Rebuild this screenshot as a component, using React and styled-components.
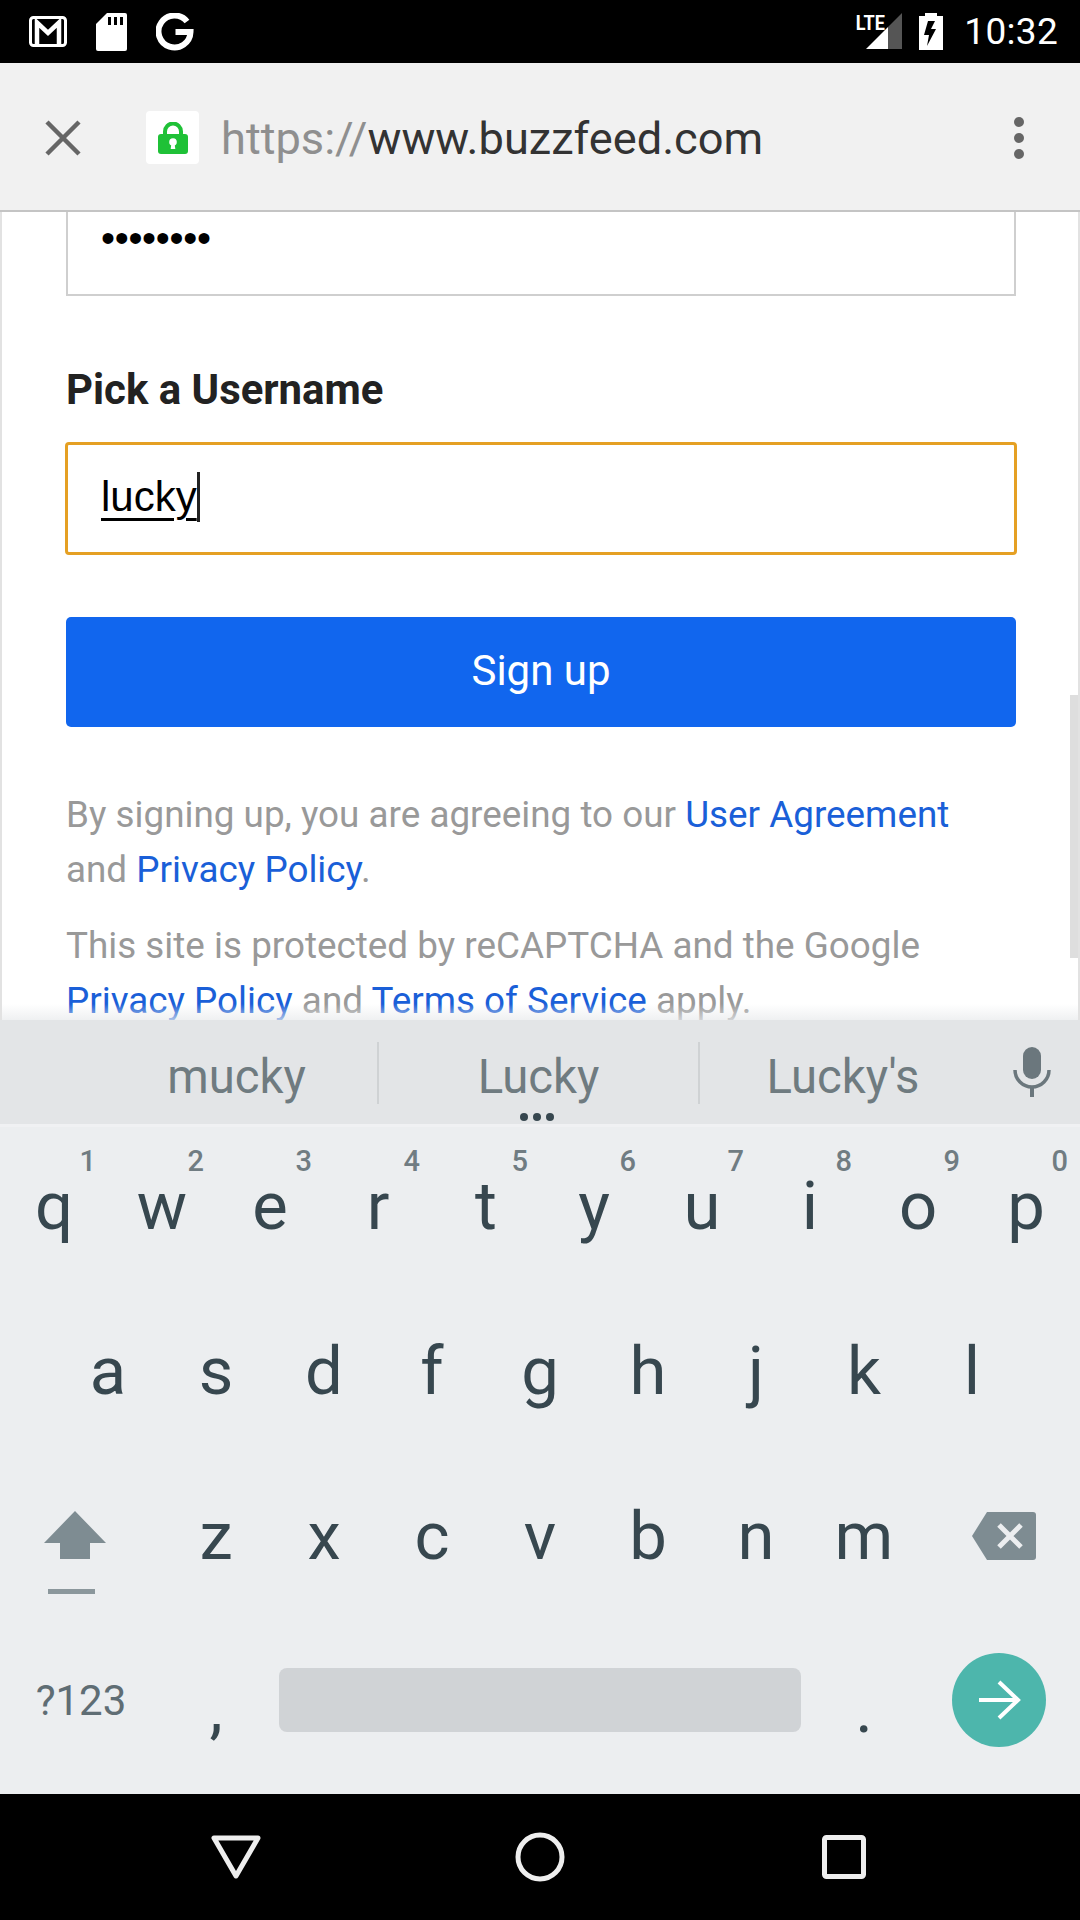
import React from 'react';
import styled, { createGlobalStyle } from 'styled-components';

const Global = createGlobalStyle`
  html, body { margin: 0; padding: 0; background: #000; }
  * { box-sizing: border-box; }
  body { font-family: Roboto, "Liberation Sans", sans-serif; }
`;

const Phone = styled.div`
  width: 1080px; height: 1920px; display: flex; flex-direction: column; overflow: hidden; background: #fff;
`;

const StatusBar = styled.div`
  height: 63px; flex: none; background: #000; display: flex; align-items: center; padding: 0 22px 0 29px; color: #fff;
`;
const StatusLeft = styled.div`display: flex; align-items: center; gap: 29px; flex: 1;`;
const SignalGap = styled.span`width: 17px; flex: none;`;
const Clock = styled.span`font-size: 37px; line-height: 63px; margin-left: 21px; letter-spacing: 0.3px;`;

const Toolbar = styled.div`
  height: 149px; flex: none; background: #f1f1f1; display: flex; align-items: center; padding: 2px 0 0 45px; position: relative; z-index: 2;
  border-bottom: 2px solid #c4c4c4;
`;
const LockTile = styled.div`
  width: 53px; height: 53px; margin-left: 65px; background: #fff; border-radius: 4px; display: flex; align-items: center; justify-content: center;
`;
const Url = styled.div`
  flex: 1; margin: 3px 0 0 22px; font-size: 45.2px; line-height: 50px; color: #333; white-space: nowrap;
`;
const Scheme = styled.span`color: #8f8f8f;`;
const Dots = styled.div`display: flex; flex-direction: column; gap: 6px; margin-right: 56px;`;
const Dot = styled.i`display: block; width: 10px; height: 10px; border-radius: 50%; background: #666;`;

const Page = styled.div`
  height: 808px; flex: none; position: relative; overflow: hidden; background: #fff; padding: 0 64px 0 66px;
  border-left: 2px solid #e2e2e2; border-right: 2px solid #e2e2e2;
  &::after { content: ''; position: absolute; left: 0; right: 0; bottom: 0; height: 16px; background: linear-gradient(rgba(255,255,255,0), rgba(232,234,236,.7)); }
`;
const PasswordField = styled.div`
  height: 84px; margin: 0 0 0 -2px; width: 950px; border: 2px solid #cfcfcf; border-top: none; padding: 11px 0 0 33px;
  font-size: 40px; line-height: 30px; letter-spacing: -0.3px; color: #000; font-family: "Liberation Sans", sans-serif;
`;
const FieldLabel = styled.div`
  font-size: 41.9px; font-weight: 700; line-height: 46px; color: #222; margin: 71px 0 0 -2px;
`;
const Input = styled.div`
  width: 952px; height: 113px; margin: 29px 0 0 -3px; border: 3px solid #e5a023; border-radius: 4px; padding: 27px 0 0 33px;
  font-family: "Liberation Sans", sans-serif; font-size: 42px; line-height: 50px; color: #000; display: flex;
`;
const Composing = styled.span`text-decoration: underline; text-decoration-thickness: 3px; text-underline-offset: 7px;`;
const Caret = styled.i`display: block; width: 3px; height: 50px; background: #222;`;
const Primary = styled.div`
  width: 950px; height: 110px; margin: 62px 0 0 -2px; padding-bottom: 3px; border-radius: 5px; background: #1166ee; color: #fff; font-size: 42px;
  display: flex; align-items: center; justify-content: center;
`;
const Legal = styled.p`
  margin: ${p => p.$top}px 0 0 -2px; font-size: 36.85px; line-height: 54.5px; color: #999; width: 930px;
`;
const Link = styled.span`color: #1a5fd8;`;
const Scrollbar = styled.div`
  position: absolute; right: -2px; top: 483px; width: 10px; height: 263px; background: #dedede;
`;

const Keyboard = styled.div`
  flex: 1; background: #eceef0; display: flex; flex-direction: column; position: relative; overflow: hidden;
`;
const Suggestions = styled.div`
  height: 107px; flex: none; background: #e3e5e7; border-bottom: 3px solid #f0f1f3; display: grid; grid-template-columns: 379px 321px 300px 80px; align-items: center; position: relative;
`;
const Suggestion = styled.div`
  font-size: 47.3px; color: #6f7b80; text-align: center; height: 62px; line-height: 70px; margin-top: 1px;
  padding: 0 ${p => p.$padR || 0}px 0 ${p => p.$pad || 0}px;
  ${p => p.$div && 'border-right: 2px solid #cfd2d4;'}
`;
const More = styled.div`
  position: absolute; left: 520px; bottom: 3px; display: flex; gap: 5px;
`;
const MoreDot = styled.i`display: block; width: 8px; height: 8px; border-radius: 50%; background: #37474f;`;
const MicCell = styled.div`display: flex; justify-content: center; padding-right: 16px;`;

const KeyRows = styled.div`margin-top: -4px; display: flex; flex-direction: column;`;
const Row = styled.div`
  height: 165px; flex: none; display: grid; grid-template-columns: repeat(${p => p.$cols || 10}, 108px); padding-left: ${p => p.$pad || 0}px; align-items: center;
`;
const Key = styled.div`
  position: relative; text-align: center; font-size: 67px; line-height: 80px; color: #37474f;
`;
const Hint = styled.span`
  position: absolute; top: -22px; right: 12px; font-size: 29px; line-height: 34px; font-weight: 500; color: #707c82;
`;
const Spacebar = styled.div`
  width: 522px; height: 64px; margin: -2px 0 0 9px; flex: none; border-radius: 8px; background: #d0d3d6;
`;
const SymKey = styled.div`font-size: 42px; color: #5f6d74; text-align: center; width: 162px; flex: none;`;
const Enter = styled.div`
  width: 94px; height: 94px; margin-top: -2px; border-radius: 50%; background: #4db6ac; display: flex; align-items: center; justify-content: center;
`;
const KeyLine = styled.div`
  height: 165px; flex: none; display: flex; align-items: center;
`;
const Cell = styled.div`
  width: ${p => p.$w}px; flex: none; display: flex; justify-content: center;
  padding: ${p => p.$top || 0}px ${p => p.$right || 0}px 0 ${p => p.$left || 0}px;
`;
const CharKey = styled.div`font-size: 67px; line-height: 64px; color: #37474f; margin-top: ${p => p.$top}px;`;

const NavBar = styled.div`
  height: 126px; flex: none; background: #000; display: grid; grid-template-columns: 472px 136px 472px; align-items: center; justify-items: center;
`;

const Gmail = () => (
  <svg width="38" height="31" viewBox="0 0 38 31"><rect x="1.5" y="1.5" width="35" height="28" rx="3" fill="none" stroke="#fff" strokeWidth="3"/><path d="M8 28V6.5L19 17 30 6.5V28" fill="none" stroke="#fff" strokeWidth="4.5"/></svg>
);
const Sd = () => (
  <svg width="31" height="38" viewBox="0 0 31 38"><path d="M11 0h18a2 2 0 0 1 2 2v34a2 2 0 0 1-2 2H2a2 2 0 0 1-2-2V11z" fill="#fff"/><path d="M12 4h3v8h-3zM18 4h3v8h-3zM24 4h3v8h-3z" fill="#000"/></svg>
);
const G = () => (
  <svg width="38" height="38" viewBox="0 0 38 38"><path d="M31 8.5A16 16 0 1 0 34.5 19H19.5" fill="none" stroke="#fff" strokeWidth="6"/></svg>
);
const Signal = () => (
  <svg width="47" height="37" viewBox="0 0 47 37" overflow="visible"><text x="1" y="17" fontFamily="Roboto, sans-serif" fontWeight="700" fontSize="21" fill="#fff" transform="scale(.86 1)">LTE</text><path d="M11 36 33 14v22z" fill="#fff"/><path d="M33 14 47 0v36H33z" fill="#555"/></svg>
);
const Battery = () => (
  <svg width="24" height="37" viewBox="0 0 24 37"><path d="M6 0h12v3h6v34H0V3h6z" fill="#fff"/><path d="M16 8H9L5 22h5L8 33l9-17h-5z" fill="#000"/></svg>
);
const CloseIcon = () => (
  <svg width="36" height="36" viewBox="0 0 36 36"><path d="M2 2 34 34M34 2 2 34" stroke="#666" strokeWidth="4.5"/></svg>
);
const Lock = () => (
  <svg width="30" height="32" viewBox="0 0 30 32"><path d="M7 14V9.5a8 8 0 0 1 16 0V14" fill="none" stroke="#1fc137" strokeWidth="4"/><rect x="0" y="12" width="30" height="20" rx="3" fill="#1fc137"/><circle cx="15" cy="20" r="3.8" fill="#fff"/><path d="M13.5 21h3l.8 6h-4.6z" fill="#fff"/></svg>
);
const Mic = () => (
  <svg width="38" height="50" viewBox="0 0 38 50"><rect x="10" y="0" width="18" height="32" rx="9" fill="#6b777d"/><path d="M2 23a17 17 0 0 0 34 0" fill="none" stroke="#6b777d" strokeWidth="3.5"/><path d="M19 40v10" stroke="#6b777d" strokeWidth="4"/></svg>
);
const Shift = () => (
  <svg width="64" height="84" viewBox="0 0 64 84"><path d="M32 0 63 32H47v16H17V32H1z" fill="#7e8c92"/><rect x="5" y="78" width="47" height="5" fill="#8b979c"/></svg>
);
const Backspace = () => (
  <svg width="64" height="48" viewBox="0 0 64 48"><path d="M15 0h46a3 3 0 0 1 3 3v42a3 3 0 0 1-3 3H15L0 24z" fill="#7e8c92"/><path d="M27 13 49 35M49 13 27 35" stroke="#eceef0" strokeWidth="5"/></svg>
);
const Arrow = () => (
  <svg width="44" height="44" viewBox="0 0 44 44"><path d="M2 22h38M22 4l19 18-19 18" fill="none" stroke="#fff" strokeWidth="4"/></svg>
);
const Back = () => (
  <svg width="50" height="44" viewBox="0 0 50 44"><path d="M3 3h44L25 41z" fill="none" stroke="#eee" strokeWidth="5" strokeLinejoin="round"/></svg>
);
const Home = () => (
  <svg width="50" height="50" viewBox="0 0 50 50"><circle cx="25" cy="25" r="22" fill="none" stroke="#eee" strokeWidth="5"/></svg>
);
const Recent = () => (
  <svg width="44" height="44" viewBox="0 0 44 44"><rect x="2.5" y="2.5" width="39" height="39" rx="2" fill="none" stroke="#eee" strokeWidth="5"/></svg>
);

const row1 = ['q','w','e','r','t','y','u','i','o','p'];
const row2 = ['a','s','d','f','g','h','j','k','l'];
const row3 = ['z','x','c','v','b','n','m'];

export default function App() {
  return (
    <Phone>
      <Global />
      <StatusBar>
        <StatusLeft><Gmail /><Sd /><G /></StatusLeft>
        <Signal />
        <SignalGap />
        <Battery />
        <Clock>10:32</Clock>
      </StatusBar>
      <Toolbar>
        <CloseIcon />
        <LockTile><Lock /></LockTile>
        <Url><Scheme>https://</Scheme>www.buzzfeed.com</Url>
        <Dots><Dot /><Dot /><Dot /></Dots>
      </Toolbar>
      <Page>
        <PasswordField>••••••••</PasswordField>
        <FieldLabel>Pick a Username</FieldLabel>
        <Input><Composing>lucky</Composing><Caret /></Input>
        <Primary>Sign up</Primary>
        <Legal $top={61}>By signing up, you are agreeing to our <Link>User Agreement</Link> and <Link>Privacy Policy</Link>.</Legal>
        <Legal $top={22}>This site is protected by reCAPTCHA and the Google <Link>Privacy Policy</Link> and <Link>Terms of Service</Link> apply.</Legal>
        <Scrollbar />
      </Page>
      <Keyboard>
        <Suggestions>
          <Suggestion $div $pad={96}>mucky</Suggestion>
          <Suggestion $div>Lucky</Suggestion>
          <Suggestion $padR={14}>Lucky's</Suggestion>
          <MicCell><Mic /></MicCell>
          <More><MoreDot /><MoreDot /><MoreDot /></More>
        </Suggestions>
        <KeyRows>
          <Row>
            {row1.map((k, i) => <Key key={k}>{k}<Hint>{(i + 1) % 10}</Hint></Key>)}
          </Row>
          <Row $pad={54} $cols={9}>
            {row2.map(k => <Key key={k}>{k}</Key>)}
          </Row>
          <KeyLine>
            <Cell $w={162} $right={12} $top={34}><Shift /></Cell>
            {row3.map(k => <Cell $w={108} key={k}><Key>{k}</Key></Cell>)}
            <Cell $w={162} $left={10}><Backspace /></Cell>
          </KeyLine>
          <KeyLine>
            <SymKey>?123</SymKey>
            <Cell $w={108}><CharKey $top={14}>,</CharKey></Cell>
            <Spacebar />
            <Cell $w={126}><CharKey $top={16}>.</CharKey></Cell>
            <Cell $w={144}><Enter><Arrow /></Enter></Cell>
          </KeyLine>
        </KeyRows>
      </Keyboard>
      <NavBar><Back /><Home /><Recent /></NavBar>
    </Phone>
  );
}
